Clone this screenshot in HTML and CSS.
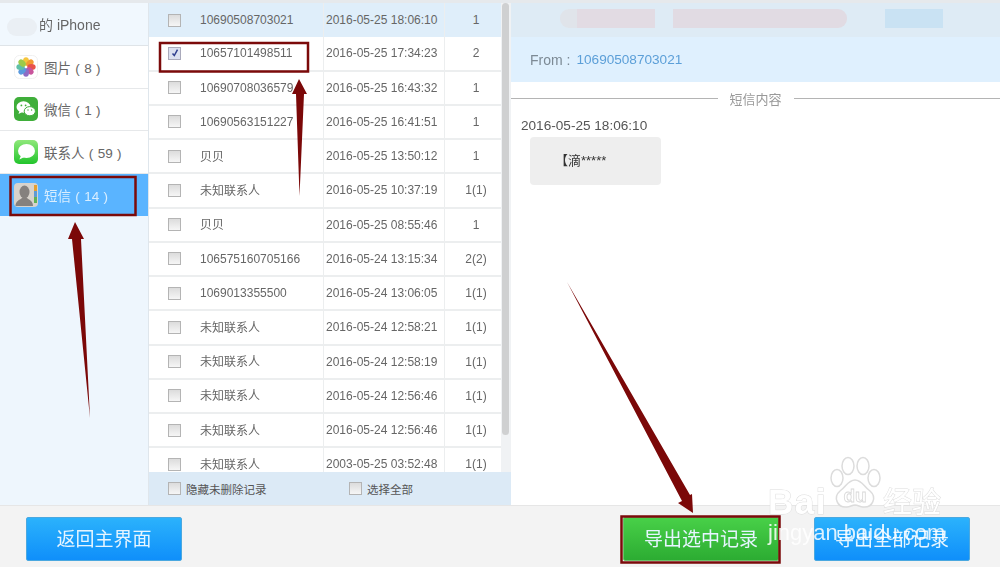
FILE: index.html
```html
<!DOCTYPE html>
<html lang="zh-CN">
<head>
<meta charset="utf-8">
<title>短信</title>
<link rel="stylesheet" href="styles.css">
</head>
<body>
<div class="app">
  <div class="main">
    <aside class="side">
      <div class="device"><span class="smudge"></span><span>的 iPhone</span></div>
      <div class="nav"><span class="ico"><svg viewBox="0 0 24 24" width="24" height="24"><rect x=".5" y=".5" width="23" height="23" rx="5" fill="#fff" stroke="#f0f0f0"/><g transform="translate(12 12)"><ellipse cy="-5.500" rx="3" ry="4.200" fill="#f6c53c"/><ellipse cy="-5.500" rx="3" ry="4.200" fill="#f29a33" transform="rotate(45)"/><ellipse cy="-5.500" rx="3" ry="4.200" fill="#e8524a" transform="rotate(90)"/><ellipse cy="-5.500" rx="3" ry="4.200" fill="#c8549c" transform="rotate(135)"/><ellipse cy="-5.500" rx="3" ry="4.200" fill="#8e6bc4" transform="rotate(180)"/><ellipse cy="-5.500" rx="3" ry="4.200" fill="#5a9ade" transform="rotate(225)"/><ellipse cy="-5.500" rx="3" ry="4.200" fill="#5fc0a8" transform="rotate(270)"/><ellipse cy="-5.500" rx="3" ry="4.200" fill="#9ccb4a" transform="rotate(315)"/></g></svg></span><span>图片 ( 8 )</span></div>
      <div class="nav"><span class="ico"><svg viewBox="0 0 24 24" width="24" height="24"><rect width="24" height="24" rx="5" fill="#3fae3a"/><ellipse cx="9.500" cy="10" rx="7" ry="5.800" fill="#fff"/><path d="M5.500 14l-1 3 3.400-1.800z" fill="#fff"/><ellipse cx="15.800" cy="14.200" rx="5.600" ry="4.600" fill="#fff" stroke="#3fae3a"/><circle cx="7.400" cy="8.400" r=".9" fill="#3fae3a"/><circle cx="11.600" cy="8.400" r=".9" fill="#3fae3a"/><circle cx="14" cy="13" r=".7" fill="#3fae3a"/><circle cx="17.600" cy="13" r=".7" fill="#3fae3a"/></svg></span><span>微信 ( 1 )</span></div>
      <div class="nav"><span class="ico"><svg viewBox="0 0 24 24" width="24" height="24"><defs><linearGradient id="g" x1="0" y1="0" x2="0" y2="1"><stop offset="0" stop-color="#8fe87a"/><stop offset="1" stop-color="#22c42c"/></linearGradient></defs><rect width="24" height="24" rx="5" fill="url(#g)"/><ellipse cx="12.500" cy="11" rx="8.500" ry="7" fill="#fff"/><path d="M7 15.500l-1.600 4 5-2.400z" fill="#fff"/></svg></span><span>联系人 ( 59 )</span></div>
      <div class="nav active"><span class="ico"><svg viewBox="0 0 24 24" width="24" height="24"><rect width="24" height="24" rx="4" fill="#d8d3cc"/><ellipse cx="10.500" cy="9" rx="5" ry="6.500" fill="#85817e"/><path d="M1.500 23c0-5 4-6 6.500-8h5c2.500 2 6 3 6 8z" fill="#85817e"/><rect x="20" y="2" width="3" height="6" fill="#e4a032"/><rect x="20" y="8" width="3" height="6" fill="#5d9bd5"/><rect x="20" y="14" width="3" height="6" fill="#5fb257"/></svg></span><span>短信 ( 14 )</span></div>
    </aside>
    <section class="list">
      <div class="rows">
        <div class="row current"><span class="c-check"><i class="box"></i></span><span class="c-name">10690508703021</span><span class="c-date">2016-05-25 18:06:10</span><span class="c-num">1</span></div>
        <div class="row"><span class="c-check"><i class="box checked"><svg viewBox="0 0 12 12" width="10" height="10"><path d="M3 6.500l2.200 2.500 3.800-7" fill="none" stroke="#2f3f8f" stroke-width="1.800"/></svg></i></span><span class="c-name">10657101498511</span><span class="c-date">2016-05-25 17:34:23</span><span class="c-num">2</span></div>
        <div class="row"><span class="c-check"><i class="box"></i></span><span class="c-name">10690708036579</span><span class="c-date">2016-05-25 16:43:32</span><span class="c-num">1</span></div>
        <div class="row"><span class="c-check"><i class="box"></i></span><span class="c-name">10690563151227</span><span class="c-date">2016-05-25 16:41:51</span><span class="c-num">1</span></div>
        <div class="row"><span class="c-check"><i class="box"></i></span><span class="c-name c-cn">贝贝</span><span class="c-date">2016-05-25 13:50:12</span><span class="c-num">1</span></div>
        <div class="row"><span class="c-check"><i class="box"></i></span><span class="c-name c-cn">未知联系人</span><span class="c-date">2016-05-25 10:37:19</span><span class="c-num">1(1)</span></div>
        <div class="row"><span class="c-check"><i class="box"></i></span><span class="c-name c-cn">贝贝</span><span class="c-date">2016-05-25 08:55:46</span><span class="c-num">1</span></div>
        <div class="row"><span class="c-check"><i class="box"></i></span><span class="c-name">106575160705166</span><span class="c-date">2016-05-24 13:15:34</span><span class="c-num">2(2)</span></div>
        <div class="row"><span class="c-check"><i class="box"></i></span><span class="c-name">1069013355500</span><span class="c-date">2016-05-24 13:06:05</span><span class="c-num">1(1)</span></div>
        <div class="row"><span class="c-check"><i class="box"></i></span><span class="c-name c-cn">未知联系人</span><span class="c-date">2016-05-24 12:58:21</span><span class="c-num">1(1)</span></div>
        <div class="row"><span class="c-check"><i class="box"></i></span><span class="c-name c-cn">未知联系人</span><span class="c-date">2016-05-24 12:58:19</span><span class="c-num">1(1)</span></div>
        <div class="row"><span class="c-check"><i class="box"></i></span><span class="c-name c-cn">未知联系人</span><span class="c-date">2016-05-24 12:56:46</span><span class="c-num">1(1)</span></div>
        <div class="row"><span class="c-check"><i class="box"></i></span><span class="c-name c-cn">未知联系人</span><span class="c-date">2016-05-24 12:56:46</span><span class="c-num">1(1)</span></div>
        <div class="row"><span class="c-check"><i class="box"></i></span><span class="c-name c-cn">未知联系人</span><span class="c-date">2003-05-25 03:52:48</span><span class="c-num">1(1)</span></div>
      </div>
      <div class="track"><div class="thumb"></div></div>
      <div class="list-foot">
        <label class="opt opt-hide"><i class="box"></i>隐藏未删除记录</label>
        <label class="opt"><i class="box"></i>选择全部</label>
      </div>
    </section>
    <section class="detail">
      <div class="detail-top"><span class="blur b1"></span><span class="blur b2"></span><span class="blur b3"></span></div>
      <div class="from">From :<span class="from-num">10690508703021</span></div>
      <div class="divider"><span>短信内容</span></div>
      <div class="stamp">2016-05-25 18:06:10</div>
      <div class="bubble">【滴*****</div>
    </section>
  </div>
  <footer class="foot">
    <button class="btn btn-blue">返回主界面</button>
    <span class="spacer"></span>
    <button class="btn btn-green">导出选中记录</button>
    <button class="btn btn-blue">导出全部记录</button>
  </footer>
</div>
<svg class="marks" viewBox="0 0 1000 567" width="1000" height="567" aria-hidden="true">
  <g fill="none" stroke="#7b0a0a" stroke-width="2.500">
    <rect x="10.500" y="177" width="125" height="38"/>
    <rect x="160" y="43" width="148" height="28.500"/>
    <rect x="621.500" y="516.500" width="158" height="46"/>
  </g>
  <g fill="#7b0808">
    <path d="M75 222l9 17h-3L90 418 72 239h-4z"/>
    <path d="M299 79l8 15h-3l-4.500 102L296 94h-4z"/>
    <path d="M693 513l-15-10 4-2L567 282l123 213 2-1z"/>
  </g>
</svg>
<div class="wm">
  <div class="wm-logo"><span class="wm-bai">Bai</span><svg viewBox="0 0 54 57" width="54" height="57"><g fill="#fff" stroke="#dcdcdc" stroke-width="1.500"><ellipse cx="9" cy="22" rx="6" ry="8.500"/><ellipse cx="20" cy="10" rx="6" ry="8.500"/><ellipse cx="35" cy="10" rx="6" ry="8.500"/><ellipse cx="46" cy="22" rx="6" ry="8.500"/><path d="M27 24c7 0 9 7 15 11 7 6 3 17-7 16-3 0-5-2-8-2s-5 2-8 2c-10 1-14-10-7-16 6-4 8-11 15-11z"/></g><text x="27" y="46" text-anchor="middle" class="wm-du">du</text></svg><span class="wm-cn">经验</span></div>
  <div class="wm-url">jingyan.baidu.com</div>
</div>
</body>
</html>
```
FILE: styles.css
```css
* { box-sizing: border-box; }
html, body { margin: 0; height: 100%; overflow: hidden; background: #fff; }
body { font-family: "Liberation Sans", "Noto Sans CJK SC", sans-serif; font-size: 12px; color: #666; }
.app { width: 1000px; height: 567px; display: flex; flex-direction: column; filter: blur(0.35px); }
.main { height: 505px; display: flex; padding-top: 3px; background: #e6e9ec; }
.side { width: 149px; background: #eef6fd; border-right: 1px solid #dfe6ec; }
.device { height: 43px; display: flex; align-items: center; padding-left: 39px; font-size: 14px; background: #f1f8fe; border-bottom: 1px solid #dfe4e8; position: relative; }
.smudge { position: absolute; left: 7px; top: 15px; width: 30px; height: 18px; border-radius: 9px; background: #eaeff4; }
.nav { height: 42.600px; display: flex; align-items: center; gap: 6px; padding-left: 14px; background: #fff; border-bottom: 1px solid #e6e8ea; font-size: 13.500px; word-spacing: .6px; white-space: nowrap; }
.nav.active { background: #5ab4ff; color: #d9eeff; border-bottom: 0; }
.ico { width: 24px; height: 24px; flex: none; }
.ico svg { display: block; }
.list { width: 362px; position: relative; display: flex; flex-wrap: wrap; align-content: flex-start; background: #fff; }
.rows { width: 352px; height: 469px; overflow: hidden; }
.row { height: 34.250px; display: flex; align-items: center; border-bottom: 2px solid #eceeef; }
.row.current { background: #dfeefa; border-bottom: 0; }
.c-check { width: 51px; padding-left: 19px; display: flex; }
.c-name { width: 123px; height: 100%; display: flex; align-items: center; white-space: nowrap; }
.c-cn { padding-bottom: 2px; }
.c-date { width: 122px; height: 100%; padding-left: 2px; display: flex; align-items: center; border-left: 1px solid #eceeef; border-right: 1px solid #eceeef; white-space: nowrap; }
.c-num { width: 56px; text-align: center; padding-left: 6px; }
.box { width: 13px; height: 13px; flex: none; display: inline-flex; align-items: center; justify-content: center; background: linear-gradient(#dcdcdc, #f6f6f6); border: 1px solid #b4b4b4; }
.box.checked { background: #dbe0f0; border-color: #aab; }
.track { width: 10px; height: 469px; background: #f0f2f4; padding-left: 1px; }
.thumb { width: 7px; height: 432px; border-radius: 4px; background: #cfd0d1; }
.list-foot { width: 362px; height: 33px; display: flex; align-items: center; background: #dceaf6; padding-left: 19px; font-size: 11.500px; color: #555; }
.opt { display: flex; align-items: center; gap: 5px; white-space: nowrap; }
.opt-hide { width: 181px; }
.detail { flex: 1; background: #fff; display: flex; flex-direction: column; }
.detail-top { height: 34px; flex: none; background: #deebf5; display: flex; align-items: center; padding: 0 0 3px 49px; }
.blur { height: 19px; display: block; }
.b1 { width: 95px; background: linear-gradient(90deg, #e0e4ea 18%, #e2dbe3 18%); border-radius: 9px 0 0 9px; }
.b2 { width: 174px; margin-left: 18px; background: #e1dbe3; border-radius: 0 9px 9px 0; }
.b3 { width: 58px; margin-left: 38px; background: #c9e2f3; }
.from { height: 45px; flex: none; display: flex; align-items: center; padding-left: 19px; background: #dff0fe; font-size: 14px; color: #7d8a95; white-space: nowrap; }
.from-num { color: #5c9fd8; font-size: 13.600px; margin-left: 6px; }
.divider { height: 16px; margin-top: 8px; flex: none; display: flex; align-items: center; justify-content: center; gap: 11px; color: #999; font-size: 13px; }
.divider::before, .divider::after { content: ""; flex: 1; height: 1px; background: #b4b4b4; }
.divider span { width: 54px; text-align: center; white-space: nowrap; }
.stamp { margin: 12px 0 0 10px; font-size: 13.600px; line-height: 16px; color: #555; }
.bubble { width: 131px; height: 48px; margin: 3px 0 0 19px; padding: 16px 0 0 25px; border-radius: 4px; background: #eeeeee; color: #333; font-size: 13px; line-height: 16px; white-space: nowrap; }
.foot { height: 62px; display: flex; align-items: flex-start; padding: 11px 30px 0 26px; background: #f3f3f3; border-top: 1px solid #e6e6e6; }
.spacer { flex: 1; }
.btn { width: 156px; height: 44px; border: 1px solid #4aa8e0; border-radius: 2px; font: 19px "Noto Sans CJK SC", sans-serif; color: #e6f5ff; background: linear-gradient(#2bb2fc, #0f8ffa); padding: 0 0 4px; }
.btn-green { margin-right: 35px; border-color: #6ac36a; background: linear-gradient(#48d048, #2cac32); }
.marks { position: absolute; left: 0; top: 0; filter: blur(0.3px); }
.wm { position: absolute; left: 768px; top: 459px; filter: blur(0.4px); }
.wm-logo { display: flex; align-items: flex-end; height: 60px; white-space: nowrap; }
.wm-bai { font: bold 35px/34px "Liberation Sans", sans-serif; letter-spacing: 1.500px; width: 60px; color: #fff; -webkit-text-stroke: 1px #dcdcdc; paint-order: stroke fill; }
.wm-logo svg { display: block; margin-bottom: 6px; }
.wm-du { font: bold 19px "Liberation Sans", sans-serif; fill: #fff; stroke: #d8d8d8; stroke-width: .8px; }
.wm-cn { font: 29px/34px "Noto Sans CJK SC", sans-serif; margin: 0 0 2px 1px; color: #fff; -webkit-text-stroke: 1px #dcdcdc; paint-order: stroke fill; }
.wm-url { font-size: 22px; line-height: 24px; margin-top: 2px; color: rgba(255,255,255,.85); white-space: nowrap; }
```
